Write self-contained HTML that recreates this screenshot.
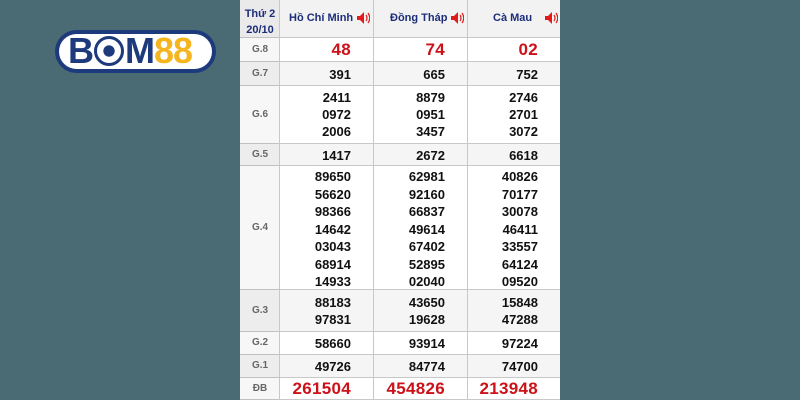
<!DOCTYPE html>
<html><head><meta charset="utf-8"><style>
*{margin:0;padding:0;box-sizing:border-box}
body{width:800px;height:400px;background:#4b6b74;position:relative;overflow:hidden;font-family:"Liberation Sans",Arial,sans-serif}
#t{position:absolute;left:240px;top:0;width:320px;height:400px;background:#fff}
.r{position:absolute;left:0;width:320px;border-bottom:1px solid #c8c8c8}
.c{position:absolute;top:0;bottom:0;border-right:1px solid #c8c8c8}
.lab{position:absolute;left:0;width:40px;color:#666;font-size:10px;font-weight:bold;text-align:center}
.n{position:absolute;font-weight:bold;font-size:13px;color:#111;text-align:right;line-height:17px}
.red{color:#cc1119;font-size:17px;letter-spacing:0.3px}
.hd{position:absolute;top:12px;font-size:11px;font-weight:bold;color:#1c2e7a}
.spk{position:absolute;top:11px;width:14px;height:14px}
</style></head><body>
<div style="position:absolute;left:55px;top:30px;width:161px;height:43px;border-radius:22px;background:#1d3a7c;"></div>
<div style="position:absolute;left:59px;top:34px;width:153px;height:35px;border-radius:18px;background:#fff;"></div>
<div style="position:absolute;left:68px;top:31px;font-size:36px;font-weight:900;letter-spacing:-1px;color:#1d3a7c;font-family:'Liberation Sans',sans-serif;line-height:40px;white-space:nowrap">B<span style="display:inline-block;width:30px;height:30px;border-radius:50%;border:3px solid #1d3a7c;vertical-align:-3px;margin:0 1px;background:radial-gradient(circle,#1d3a7c 32%,#fff 35%)"></span>M<span style="color:#f5b51e">88</span></div>
<div id="t">
<div class="r" style="top:0;height:38px;background:#f2f2f2"></div>
<div class="r" style="top:38px;height:24px"></div>
<div class="r" style="top:62px;height:24px;background:#f5f5f5"></div>
<div class="r" style="top:86px;height:58px"></div>
<div class="r" style="top:144px;height:22px;background:#f5f5f5"></div>
<div class="r" style="top:166px;height:124px"></div>
<div class="r" style="top:290px;height:42px;background:#f5f5f5"></div>
<div class="r" style="top:332px;height:23px"></div>
<div class="r" style="top:355px;height:23px;background:#f5f5f5"></div>
<div class="r" style="top:378px;height:22px"></div>
<div style="position:absolute;left:0;top:0;width:40px;height:400px;background:rgba(0,0,0,0.03)"></div>
<div class="c" style="left:0;width:40px"></div>
<div class="c" style="left:40px;width:94px"></div>
<div class="c" style="left:134px;width:94px"></div>
<div class="lab" style="top:6px;color:#1c2e7a;font-size:11px;line-height:16px">Thứ 2<br>20/10</div>
<div class="hd" style="left:49px">Hồ Chí Minh</div>
<div class="hd" style="left:150px">Đồng Tháp</div>
<div class="hd" style="left:253px">Cà Mau</div>
<svg class="spk" style="left:116px" viewBox="0 0 14 14"><path d="M1 5h3l4-4v12l-4-4H1z" fill="#e01b1b"/><path d="M10 4q2 3 0 6M12 2q3.5 5 0 10" stroke="#e01b1b" fill="none" stroke-width="1.2"/></svg>
<svg class="spk" style="left:210px" viewBox="0 0 14 14"><path d="M1 5h3l4-4v12l-4-4H1z" fill="#e01b1b"/><path d="M10 4q2 3 0 6M12 2q3.5 5 0 10" stroke="#e01b1b" fill="none" stroke-width="1.2"/></svg>
<svg class="spk" style="left:304px" viewBox="0 0 14 14"><path d="M1 5h3l4-4v12l-4-4H1z" fill="#e01b1b"/><path d="M10 4q2 3 0 6M12 2q3.5 5 0 10" stroke="#e01b1b" fill="none" stroke-width="1.2"/></svg>
<div class="lab" style="top:44px">G.8</div>
<div class="lab" style="top:68px">G.7</div>
<div class="lab" style="top:109px">G.6</div>
<div class="lab" style="top:149px">G.5</div>
<div class="lab" style="top:222px">G.4</div>
<div class="lab" style="top:305px">G.3</div>
<div class="lab" style="top:337px">G.2</div>
<div class="lab" style="top:360px">G.1</div>
<div class="lab" style="top:383px">ĐB</div>

<div class="n red" style="right:209px;top:41px">48</div>
<div class="n red" style="right:115px;top:41px">74</div>
<div class="n red" style="right:22px;top:41px">02</div>
<div class="n" style="right:209px;top:66px">391</div>
<div class="n" style="right:115px;top:66px">665</div>
<div class="n" style="right:22px;top:66px">752</div>
<div class="n" style="right:209px;top:89px">2411<br>0972<br>2006</div>
<div class="n" style="right:115px;top:89px">8879<br>0951<br>3457</div>
<div class="n" style="right:22px;top:89px">2746<br>2701<br>3072</div>
<div class="n" style="right:209px;top:147px">1417</div>
<div class="n" style="right:115px;top:147px">2672</div>
<div class="n" style="right:22px;top:147px">6618</div>
<div class="n" style="right:209px;top:168px;line-height:17.5px">89650<br>56620<br>98366<br>14642<br>03043<br>68914<br>14933</div>
<div class="n" style="right:115px;top:168px;line-height:17.5px">62981<br>92160<br>66837<br>49614<br>67402<br>52895<br>02040</div>
<div class="n" style="right:22px;top:168px;line-height:17.5px">40826<br>70177<br>30078<br>46411<br>33557<br>64124<br>09520</div>
<div class="n" style="right:209px;top:294px">88183<br>97831</div>
<div class="n" style="right:115px;top:294px">43650<br>19628</div>
<div class="n" style="right:22px;top:294px">15848<br>47288</div>
<div class="n" style="right:209px;top:335px">58660</div>
<div class="n" style="right:115px;top:335px">93914</div>
<div class="n" style="right:22px;top:335px">97224</div>
<div class="n" style="right:209px;top:358px">49726</div>
<div class="n" style="right:115px;top:358px">84774</div>
<div class="n" style="right:22px;top:358px">74700</div>
<div class="n red" style="right:209px;top:380px">261504</div>
<div class="n red" style="right:115px;top:380px">454826</div>
<div class="n red" style="right:22px;top:380px">213948</div>
</div>
</body></html>
